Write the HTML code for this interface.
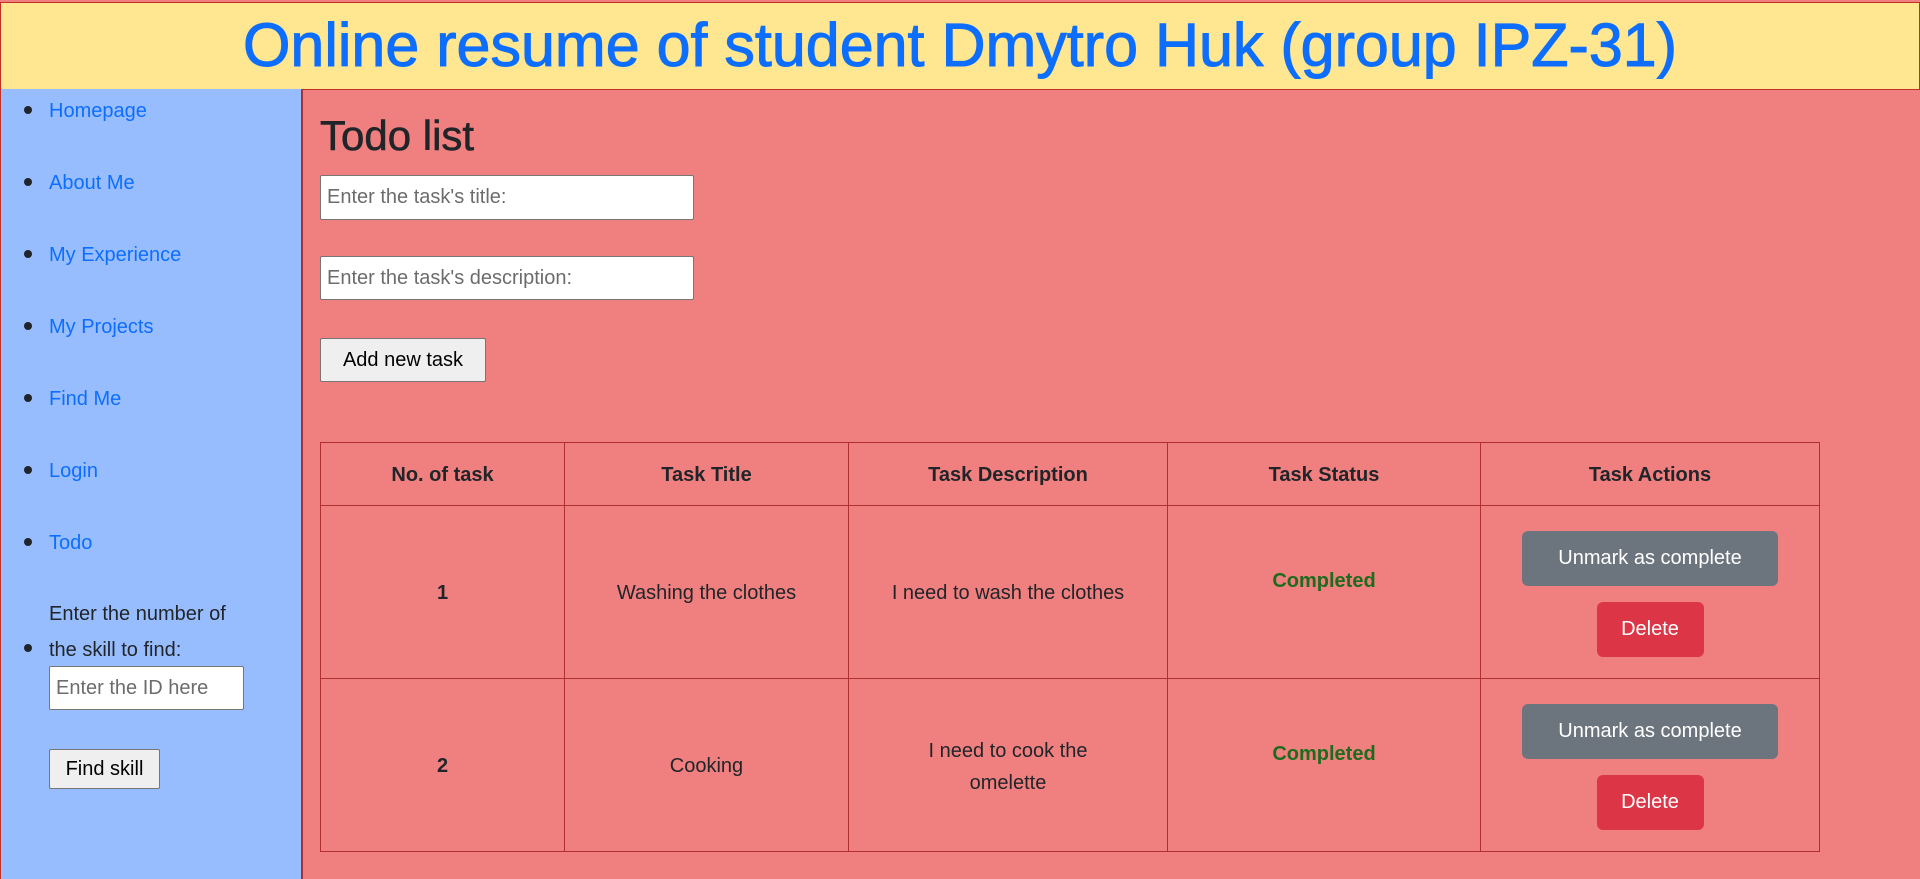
<!DOCTYPE html>
<html><head><meta charset="utf-8"><style>
*{box-sizing:border-box;margin:0;padding:0}
body{width:1920px;height:868px;overflow:hidden;font-family:"Liberation Sans","DejaVu Sans",sans-serif;font-size:20px;color:#212529;background:#f08080;position:relative}
.hdr{position:absolute;left:0;top:2px;width:1920px;height:88px;background:#ffe690;border:1px solid #c0302a;text-align:center;color:#0d6efd;font-size:61px;font-weight:normal;line-height:84px;-webkit-text-stroke:1px #0d6efd}
.side{position:absolute;left:0;top:89px;width:303px;height:790px;background:#98bdff;border-right:2px solid #b03030;border-left:1px solid #c0302a}
.li{position:absolute;left:49px;color:#0d6efd;font-size:20px}
.dot{position:absolute;left:24px;width:8px;height:8px;border-radius:50%;background:#212529}
.in{position:absolute;background:#fff;border:1px solid #767676;border-radius:2px;color:#6c6c6c;font-size:20px;padding-left:6px;display:flex;align-items:center}
.btn{position:absolute;background:#efefef;border:1px solid #767676;border-radius:2px;font-size:20px;color:#000;display:flex;align-items:center;justify-content:center}
h2{position:absolute;left:320px;top:111px;font-size:42px;font-weight:normal;line-height:50px;-webkit-text-stroke:0.6px #212529}
table{position:absolute;left:320px;top:442px;width:1500px;border-collapse:collapse}
td,th{border:1px solid #b03030;text-align:center;vertical-align:middle;font-size:20px}
th{height:63px;font-weight:bold;padding-top:3px}
td{height:173px;padding-top:3px}
.done{color:#1e6b1e;font-weight:bold;position:relative;top:-12px}
.b{display:inline-block;border-radius:6px;color:#fff;font-size:20px}
.g{background:#6c757d;width:256px;height:55px;line-height:55px}
.r{background:#dc3545;width:107px;height:55px;line-height:55px;margin-top:16px}
</style></head><body>
<div class="hdr">Online resume of student Dmytro Huk (group IPZ-31)</div>
<div class="side"></div>
<div class="dot" style="top:106px"></div><div class="li" style="top:100px">Homepage</div>
<div class="dot" style="top:178px"></div><div class="li" style="top:172px">About Me</div>
<div class="dot" style="top:250px"></div><div class="li" style="top:244px">My Experience</div>
<div class="dot" style="top:322px"></div><div class="li" style="top:316px">My Projects</div>
<div class="dot" style="top:394px"></div><div class="li" style="top:388px">Find Me</div>
<div class="dot" style="top:466px"></div><div class="li" style="top:460px">Login</div>
<div class="dot" style="top:538px"></div><div class="li" style="top:532px">Todo</div>
<div class="dot" style="top:644px"></div>
<div class="li" style="top:596px;color:#212529;line-height:36px;width:200px">Enter the number of<br>the skill to find:</div>
<div class="in" style="left:49px;top:666px;width:195px;height:44px">Enter the ID here</div>
<div class="btn" style="left:49px;top:749px;width:111px;height:40px">Find skill</div>
<h2>Todo list</h2>
<div class="in" style="left:320px;top:175px;width:374px;height:45px">Enter the task's title:</div>
<div class="in" style="left:320px;top:256px;width:374px;height:44px">Enter the task's description:</div>
<div class="btn" style="left:320px;top:338px;width:166px;height:44px">Add new task</div>
<table>
<tr><th style="width:244px">No. of task</th><th style="width:284px">Task Title</th><th style="width:319px">Task Description</th><th style="width:313px">Task Status</th><th>Task Actions</th></tr>
<tr><td><b>1</b></td><td>Washing the clothes</td><td>I need to wash the clothes</td><td><span class="done">Completed</span></td><td><span class="b g">Unmark as complete</span><br><span class="b r">Delete</span></td></tr>
<tr><td><b>2</b></td><td>Cooking</td><td style="line-height:32px">I need to cook the<br>omelette</td><td><span class="done">Completed</span></td><td><span class="b g">Unmark as complete</span><br><span class="b r">Delete</span></td></tr>
</table>
</body></html>
